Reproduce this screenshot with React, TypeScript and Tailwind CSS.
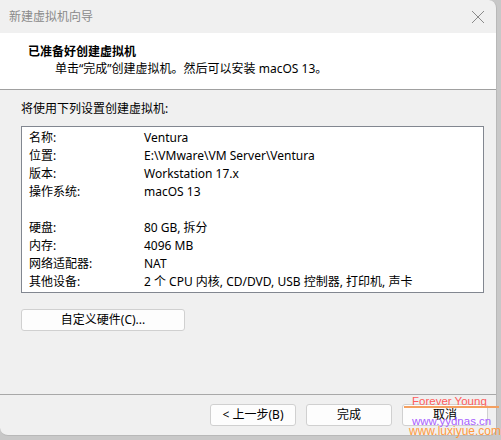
import React from "react";

const FONT = "font-['Segoe_UI','Noto_Sans','Noto_Sans_CJK_SC',sans-serif]";

const rows: [string, string][] = [
  ["名称:", "Ventura"],
  ["位置:", "E:\\VMware\\VM Server\\Ventura"],
  ["版本:", "Workstation 17.x"],
  ["操作系统:", "macOS 13"],
  ["", ""],
  ["硬盘:", "80 GB, 拆分"],
  ["内存:", "4096 MB"],
  ["网络适配器:", "NAT"],
  ["其他设备:", "2 个 CPU 内核, CD/DVD, USB 控制器, 打印机, 声卡"],
];

function WizardButton({ label, className = "" }: { label: string; className?: string }) {
  return (
    <button
      type="button"
      className={`flex h-[22px] items-center justify-center rounded-[3px] border border-[#d0d0d0] bg-[#fdfdfd] text-[12px] text-black ${className}`}
    >
      {label}
    </button>
  );
}

export default function App() {
  return (
    <div className={`relative flex h-[440px] w-[501px] bg-[#c8c8c8] ${FONT}`}>
      <div className="flex h-[436px] w-[497px] flex-col overflow-hidden rounded-b-[8px] rounded-tr-[8px] border-b border-r border-[#b8b8b8] bg-[#f0f0f0]">
        {/* title bar */}
        <div className="flex h-[33px] shrink-0 items-center justify-between pl-[9px] pr-[9px]">
          <span className="text-[12px] text-[#8a8a8a]">新建虚拟机向导</span>
          <svg width="14" height="14" viewBox="0 0 14 14" className="mr-[2px]">
            <path d="M1 1 L13 13 M13 1 L1 13" stroke="#8a8a8a" strokeWidth="1" />
          </svg>
        </div>

        {/* header */}
        <div className="flex h-[57px] shrink-0 flex-col border-b border-[#a0a0a0] bg-white pl-[28px] pt-[10px]">
          <div className="text-[12px] font-bold leading-[17px] text-black">已准备好创建虚拟机</div>
          <div className="pl-[27px] text-[12px] leading-[17px] text-black">
            单击“完成”创建虚拟机。然后可以安装 macOS 13。
          </div>
        </div>

        {/* body */}
        <div className="flex flex-1 flex-col px-[21px] pt-[10px]">
          <div className="text-[12px] leading-[17px] text-black">将使用下列设置创建虚拟机:</div>
          <div className="mt-[9px] h-[167px] w-[463px] border border-[#828790] bg-white pl-[7px] pt-[2px]">
            {rows.map(([k, v], i) => (
              <div key={i} className="flex h-[18px] items-center text-[12px] text-black">
                <span className="w-[115px]">{k}</span>
                <span>{v}</span>
              </div>
            ))}
          </div>
          <WizardButton label="自定义硬件(C)..." className="mt-[16px] w-[164px]" />
        </div>

        {/* footer */}
        <div className="flex h-[41px] shrink-0 items-start justify-end gap-[10px] border-t border-[#a8a8a8] pr-[8px] pt-[9px]">
          <WizardButton label="< 上一步(B)" className="w-[86px]" />
          <WizardButton label="完成" className="w-[86px]" />
          <WizardButton label="取消" className="w-[86px]" />
        </div>
      </div>

      {/* watermark */}
      <div className="pointer-events-none absolute left-[412px] top-[395px] font-['Liberation_Sans',sans-serif] text-[11.5px] leading-[13px] text-[#ff5c5c]">
        Forever Young
      </div>
      <div className="pointer-events-none absolute left-[404px] top-[406px] h-[2px] w-[95px] bg-[#f4a060]" />
      <div className="pointer-events-none absolute left-[412px] top-[415px] font-['Liberation_Sans',sans-serif] text-[11.5px] leading-[13px] text-[#a860ff]">
        www.yydnas.cn
      </div>
      <div className="pointer-events-none absolute left-[409px] top-[425px] font-['Liberation_Sans',sans-serif] text-[12px] leading-[13px] text-[#ff9a40]">
        www.luxiyue.com
      </div>
    </div>
  );
}
